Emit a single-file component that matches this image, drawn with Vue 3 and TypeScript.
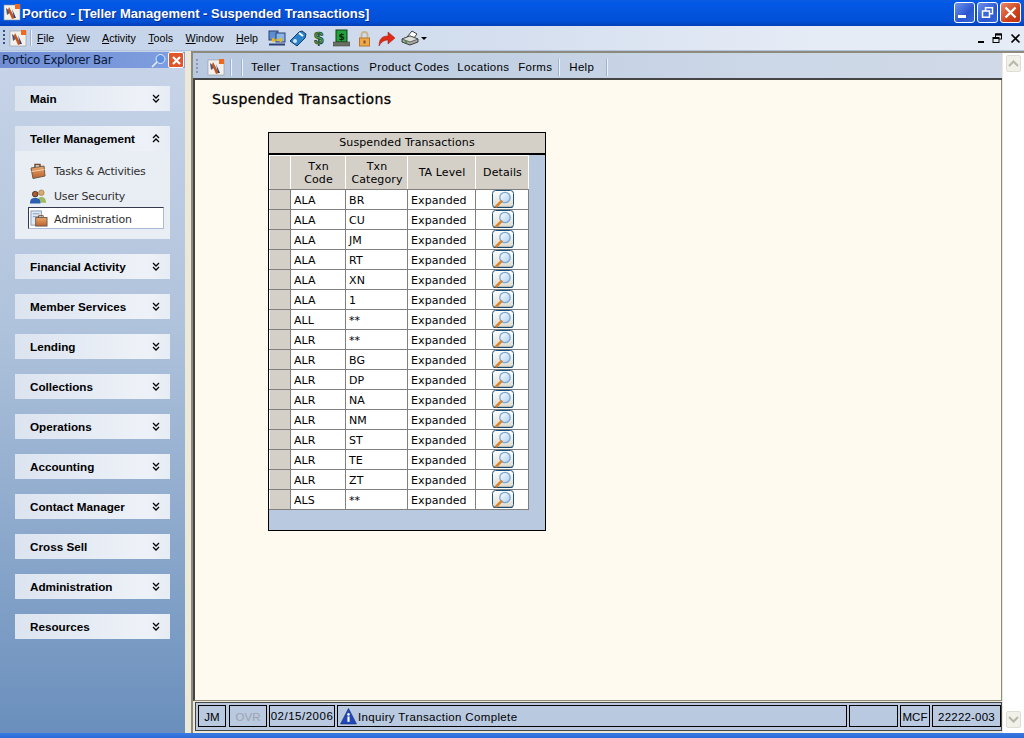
<template>
  <div class="window">
    <header class="titlebar">
      <svg class="app-icon" width="18" height="18" viewBox="0 0 18 18"><use href="#portico-logo" /></svg>
      <span class="title-text">Portico - [Teller Management - Suspended Transactions]</span>
      <div class="win-buttons">
        <button class="win-btn"><i class="glyph-min"></i></button>
        <button class="win-btn">
          <svg width="15" height="15" viewBox="0 0 15 15" fill="none" stroke="#fff" stroke-width="1.5"><rect x="5.5" y="2.7" width="7" height="6" /><rect x="2.5" y="6" width="7" height="6.2" fill="#3b68d8" /></svg>
        </button>
        <button class="win-btn close">
          <svg width="15" height="15" viewBox="0 0 15 15" stroke="#fff" stroke-width="2.4"><path d="M2.5 2.5l10 10M12.5 2.5l-10 10" /></svg>
        </button>
      </div>
    </header>

    <svg width="0" height="0" class="defs">
      <defs>
        <linearGradient id="btn-fill" x1="0" y1="0" x2="0" y2="1"><stop offset="0" stop-color="#ffffff" /><stop offset="1" stop-color="#dedbcc" /></linearGradient>
        <linearGradient id="glass" x1="0" y1="0" x2="1" y2="1"><stop offset="0" stop-color="#ffffff" /><stop offset="1" stop-color="#a9cdee" /></linearGradient>
        <linearGradient id="case-fill" x1="0" y1="0" x2="0" y2="1"><stop offset="0" stop-color="#eaa66c" /><stop offset="1" stop-color="#b9622c" /></linearGradient>
        <g id="portico-logo">
          <rect x="1" y="2" width="16" height="15" fill="#f4f1ea" stroke="#8d95a5" stroke-width=".6" />
          <rect x="12" y="1" width="5" height="5" fill="#ee6a1f" />
          <path d="M3 5l5 4-4 3z" fill="#4d5a78" />
          <path d="M6 4l6 11-3 1-4-9z" fill="#c8541c" />
          <path d="M9 6l4 9h-2z" fill="#24417f" />
        </g>
        <g id="lens">
          <rect x=".5" y=".5" width="21" height="17" rx="3" fill="url(#btn-fill)" stroke="#1d527f" />
          <path d="M1.500 17.300h19" stroke="#17446c" />
          <circle cx="13" cy="7.500" r="5.200" fill="url(#glass)" stroke="#7aa6d2" stroke-width="1.300" />
          <path d="M9.300 11.300l-5 5" stroke="#d8822c" stroke-width="2.600" stroke-linecap="round" />
        </g>
      </defs>
    </svg>

    <div class="menubar">
      <span class="grip"></span>
      <svg class="menu-logo" width="18" height="18" viewBox="0 0 18 18"><use href="#portico-logo" /></svg>
      <span class="sep"></span>
      <nav class="menus">
        <span v-for="m in menus" :key="m.rest" class="menu"><u>{{ m.key }}</u>{{ m.rest }}</span>
      </nav>
      <div class="tools">
        <svg width="18" height="16" viewBox="0 0 18 16"><rect x="1" y="1" width="9" height="9" fill="#5d8fd0" stroke="#2b3f78" /><rect x="8" y="3" width="9" height="9" fill="#8ab4e4" stroke="#2b3f78" /><path d="M4 10h10M4 10l2-2M4 10l2 2M14 10l-2-2M14 10l-2 2" stroke="#e8b81e" stroke-width="1.6" fill="none" /><path d="M1 14.500h16" stroke="#2b3f78" stroke-width="2" /></svg>
        <svg width="18" height="17" viewBox="0 0 18 17"><path d="M1 11l9-9 3-1 4 3-1 4-8 8z" fill="#2c82c8" stroke="#123f70" /><circle cx="6" cy="11" r="2" fill="#cfe8fa" /><path d="M10 3l4 3" stroke="#fff" stroke-width="2" /></svg>
        <svg width="13" height="18" viewBox="0 0 13 18"><text x="0" y="15" class="dollar" fill="#4aa04a" stroke="#23402a" stroke-width=".7">$</text></svg>
        <svg width="17" height="18" viewBox="0 0 17 18"><rect x="3" y="1" width="11" height="12" fill="#23a23c" stroke="#123a1c" /><text x="5.500" y="11" class="dollar-sm" fill="#06240d">$</text><rect x="0" y="13" width="17" height="4" fill="#6b6f63" stroke="#3a3c36" stroke-width=".5" /></svg>
        <svg width="13" height="17" viewBox="0 0 13 17"><path d="M3.500 8V5a3 3 0 016 0v3" fill="none" stroke="#c9b48c" stroke-width="1.800" /><rect x="1.500" y="8" width="10" height="8" fill="#eea84a" stroke="#b5762d" /><rect x="5.500" y="10.500" width="2" height="3" fill="#8a4f1c" /></svg>
        <svg width="18" height="17" viewBox="0 0 18 17"><path d="M1 16c0-7 3-10 9-10V2l7 6-7 6V10c-4 0-7 2-9 6z" fill="#df2a18" stroke="#98200f" stroke-width=".5" /></svg>
        <svg width="18" height="16" viewBox="0 0 18 16"><path d="M6 7l5-6 5 3-4 5z" fill="#fff" stroke="#3c3c3c" /><path d="M1 9l8-3 8 3v3l-8 3-8-3z" fill="#a9a9a2" stroke="#3c3c3c" /><path d="M1 9l8 3 8-3-8-3z" fill="#dededa" stroke="#3c3c3c" stroke-width=".7" /><rect x="4" y="11" width="2" height="2" fill="#3aa23a" /></svg>
        <i class="caret"></i>
      </div>
      <div class="mdi-buttons">
        <i class="mdi-min"></i>
        <svg width="11" height="11" viewBox="0 0 11 11" fill="none" stroke="#000"><rect x="3.500" y="1" width="6" height="5" stroke-width="1" /><path d="M3.500 1.500h6" stroke-width="2" /><rect x="1" y="4.500" width="6" height="5" fill="#e5ebf5" /><path d="M1 5h6" stroke-width="2" /></svg>
        <svg width="11" height="11" viewBox="0 0 11 11" stroke="#000" stroke-width="1.700"><path d="M1.500 1.500l8 8M9.500 1.500l-8 8" /></svg>
      </div>
    </div>

    <div class="workspace">
      <aside class="explorer">
        <div class="explorer-head">
          <span>Portico Explorer Bar</span>
          <svg width="17" height="15" viewBox="0 0 17 15"><circle cx="10.500" cy="6" r="4.500" fill="#5f8fe0" stroke="#e6eeff" /><path d="M7 9l-5 5" stroke="#e6eeff" stroke-width="1.600" /></svg>
          <button class="explorer-close">
            <svg width="11" height="11" viewBox="0 0 11 11" stroke="#fff" stroke-width="2.200"><path d="M2 2l7 7M9 2l-7 7" /></svg>
          </button>
        </div>
        <div class="sections">
          <section v-for="s in sections" :key="s.name" class="section">
            <div class="section-head">
              <span>{{ s.name }}</span>
              <svg width="8" height="9" viewBox="0 0 8 9" fill="none" stroke="#000" stroke-width="1.300">
                <path v-if="s.items" d="M1 4l3-3 3 3M1 8l3-3 3 3" />
                <path v-else d="M1 1l3 3 3-3M1 5l3 3 3-3" />
              </svg>
            </div>
            <div v-if="s.items" class="section-body">
              <div v-for="it in s.items" :key="it.label" class="nav-item" :class="{ active: it.active }">
                <i class="nav-icon">
                  <svg v-if="it.icon === 'case'" width="16" height="16" viewBox="0 0 16 16"><path d="M5 4V1.500h5V4" fill="none" stroke="#7a4a26" stroke-width="1.500" /><path d="M1 5l13-2 1 10-12 2.500z" fill="url(#case-fill)" stroke="#6b5a4a" /><path d="M1.500 8.500l13-2" stroke="#f6d2ab" /></svg>
                  <svg v-else-if="it.icon === 'users'" width="17" height="15" viewBox="0 0 18 15"><circle cx="12" cy="3.500" r="3" fill="#d9a86a" stroke="#7a6a3a" stroke-width=".5" /><path d="M8 14c0-5 2-6 4-6s5 1 5 6z" fill="#9cbb62" /><circle cx="5.500" cy="5" r="3" fill="#a85a30" stroke="#222" stroke-width=".7" /><path d="M0 15c0-5 2-6 5.500-6s5.500 1 5.500 6z" fill="#2c5fb0" /></svg>
                  <svg v-else width="18" height="17" viewBox="0 0 19 18"><rect x="1" y="1" width="11" height="15" fill="#dfe8f5" stroke="#8a9ab5" /><path d="M3 4h7M3 7h7" stroke="#8a9ab5" /><path d="M9 8V6h5v2" fill="none" stroke="#7a4a26" /><rect x="6" y="8" width="12" height="9" fill="url(#case-fill)" stroke="#6b5a4a" /></svg>
                </i>
                <span class="nav-label">{{ it.label }}</span>
              </div>
            </div>
          </section>
        </div>
      </aside>

      <div class="splitter"></div>

      <main class="child-frame">
        <div class="child-main">
          <div class="child-toolbar">
            <span class="grip light"></span>
            <svg class="menu-logo" width="18" height="18" viewBox="0 0 18 18"><use href="#portico-logo" /></svg>
            <span class="sep first"></span>
            <span class="sep second"></span>
            <span class="child-menu wide">Teller</span>
            <span class="child-menu wide">Transactions</span>
            <span class="child-menu">Product Codes</span>
            <span class="child-menu locations">Locations</span>
            <span class="child-menu forms">Forms</span>
            <span class="sep third"></span>
            <span class="child-menu">Help</span>
            <span class="sep fourth"></span>
          </div>

          <div class="page">
            <h1>Suspended Transactions</h1>
            <div class="grid-box">
              <div class="grid-caption">Suspended Transactions</div>
              <div class="grid-body">
                <table>
                  <thead>
                    <tr>
                      <th class="c0"></th>
                      <th class="c1">Txn<br />Code</th>
                      <th class="c2">Txn<br />Category</th>
                      <th class="c3">TA Level</th>
                      <th class="c4">Details</th>
                    </tr>
                  </thead>
                  <tbody>
                    <tr v-for="(r, i) in rows" :key="i">
                      <td class="rowhead"></td>
                      <td>{{ r[0] }}</td>
                      <td>{{ r[1] }}</td>
                      <td>Expanded</td>
                      <td class="details"><svg width="22" height="18" viewBox="0 0 22 18"><use href="#lens" /></svg></td>
                    </tr>
                  </tbody>
                </table>
              </div>
            </div>
          </div>

          <footer class="statusbar">
            <span class="cell jm">JM</span>
            <span class="cell ovr">OVR</span>
            <span class="cell date">02/15/2006</span>
            <span class="cell message">
              <svg width="17" height="17" viewBox="0 0 16 16"><path d="M8 .5L15.500 15H.5z" fill="#2048b8" stroke="#16307e" stroke-width=".6" /><circle cx="8" cy="6" r="1.200" fill="#fff" /><rect x="7" y="8" width="2" height="5" fill="#fff" /></svg>
              Inquiry Transaction Complete
            </span>
            <span class="cell blank"></span>
            <span class="cell mcf">MCF</span>
            <span class="cell acct">22222-003</span>
          </footer>
        </div>

        <div class="scrollbar">
          <button class="scroll-btn"><svg width="11" height="7" viewBox="0 0 11 7" fill="none" stroke="#b7b7aa" stroke-width="2"><path d="M1 6l4.500-4.500L10 6" /></svg></button>
          <button class="scroll-btn"><svg width="11" height="7" viewBox="0 0 11 7" fill="none" stroke="#b7b7aa" stroke-width="2"><path d="M1 1l4.500 4.500L10 1" /></svg></button>
        </div>
      </main>
    </div>
    <div class="taskstrip"></div>
  </div>
</template>

<script setup lang="ts">
interface NavItem {
  label: string;
  icon: string;
  active?: boolean;
}
interface Section {
  name: string;
  items?: NavItem[];
}

const menus = [
  { key: "F", rest: "ile" },
  { key: "V", rest: "iew" },
  { key: "A", rest: "ctivity" },
  { key: "T", rest: "ools" },
  { key: "W", rest: "indow" },
  { key: "H", rest: "elp" },
];

const sections: Section[] = [
  { name: "Main" },
  {
    name: "Teller Management",
    items: [
      { label: "Tasks & Activities", icon: "case" },
      { label: "User Security", icon: "users" },
      { label: "Administration", icon: "admin", active: true },
    ],
  },
  { name: "Financial Activity" },
  { name: "Member Services" },
  { name: "Lending" },
  { name: "Collections" },
  { name: "Operations" },
  { name: "Accounting" },
  { name: "Contact Manager" },
  { name: "Cross Sell" },
  { name: "Administration" },
  { name: "Resources" },
];

const rows: [string, string][] = [
  ["ALA", "BR"],
  ["ALA", "CU"],
  ["ALA", "JM"],
  ["ALA", "RT"],
  ["ALA", "XN"],
  ["ALA", "1"],
  ["ALL", "**"],
  ["ALR", "**"],
  ["ALR", "BG"],
  ["ALR", "DP"],
  ["ALR", "NA"],
  ["ALR", "NM"],
  ["ALR", "ST"],
  ["ALR", "TE"],
  ["ALR", "ZT"],
  ["ALS", "**"],
];
</script>

<style>
html, body { margin: 0; overflow: hidden; }
</style>

<style scoped>
.window { width: 1024px; height: 738px; display: flex; flex-direction: column; font-family: "DejaVu Sans", sans-serif; font-size: 11px; color: #000; overflow: hidden; background: #ece9d8; }
.defs { position: absolute; }

.titlebar { height: 26px; flex: none; display: flex; align-items: center; padding: 0 3px 2px 3px; box-sizing: border-box; background: linear-gradient(#0a5be0 0, #0058e6 12%, #0453dd 50%, #0050d8 80%, #0040b8 100%); }
.title-text { margin: 2px 0 0 1px; color: #fff; font: bold 13px "Liberation Sans", sans-serif; text-shadow: 1px 1px 0 #0a2f8c; }
.win-buttons { margin-left: auto; display: flex; gap: 2px; }
.win-btn { width: 21px; height: 21px; padding: 0; border: 1px solid #fff; border-radius: 3px; background: linear-gradient(135deg, #6f93ea, #2a55d2 60%, #3b68d8); display: flex; align-items: center; justify-content: center; position: relative; }
.win-btn.close { background: linear-gradient(135deg, #e88a6a, #d0421c 60%, #b8300f); }
.glyph-min { display: block; width: 8px; height: 3px; background: #fff; margin: 8px 5px 0 0; }

.menubar { height: 25px; flex: none; display: flex; align-items: center; box-sizing: border-box; padding-left: 3px; background: linear-gradient(90deg, #c1d1e8, #d5dfef 50%, #e6ecf6 80%); border-bottom: 1px solid #b4c4de; }
.grip { width: 2px; height: 16px; margin-right: 4px; background: repeating-linear-gradient(#33538c 0 2px, transparent 2px 4px); }
.grip.light { background: repeating-linear-gradient(#8f99a8 0 2px, transparent 2px 4px); margin-right: 9px; }
.menu-logo { flex: none; }
.sep { width: 1px; height: 16px; background: #eef2f8; border-left: 1px solid #9fb2cd; margin-left: 3px; }
.sep.first { margin-left: 5px; height: 17px; }
.sep.second { margin-left: 9px; margin-right: 8px; height: 17px; }
.sep.third { height: 17px; margin: 0 9px 0 0; }
.sep.fourth { height: 17px; margin: 0 0 0 4px; }
.menus { display: flex; gap: 12.400px; margin-left: 5px; font: 10.700px "Liberation Sans", sans-serif; }
.menu u { text-decoration: underline; }
.tools { display: flex; align-items: center; margin-left: 10px; }
.tools svg:nth-child(2) { margin-left: 3px; }
.tools svg:nth-child(3) { margin-left: 7px; }
.tools svg:nth-child(4) { margin-left: 6px; }
.tools svg:nth-child(5) { margin-left: 8px; }
.tools svg:nth-child(6) { margin-left: 7px; }
.tools svg:nth-child(7) { margin-left: 5px; }
.dollar { font: bold 17px "Liberation Sans", sans-serif; }
.dollar-sm { font: bold 9px "DejaVu Sans", sans-serif; }
.caret { width: 0; height: 0; border: 3px solid transparent; border-top: 3px solid #000; border-bottom: 0; margin-left: 2px; }
.mdi-buttons { margin-left: auto; display: flex; align-items: center; gap: 7px; padding-right: 3px; }
.mdi-min { display: block; width: 6px; height: 2px; background: #000; margin-top: 8px; margin-right: 1px; }

.workspace { flex: 1; min-height: 0; display: flex; }
.explorer { width: 185px; flex: none; display: flex; flex-direction: column; background: linear-gradient(#c8d4e8, #b0c3dc 40%, #6a8fbc 100%); }
.explorer-head { height: 16px; flex: none; margin-top: 1px; display: flex; align-items: center; padding: 0 1px 0 2px; background: linear-gradient(90deg, #6f8ed4, #7f9fe0); color: #0a1838; font: 11.800px "DejaVu Sans", sans-serif; letter-spacing: -.35px; }
.explorer-head span { flex: 1; }
.explorer-close { width: 16px; height: 16px; padding: 0; border: 1px solid #fff; border-radius: 2px; background: #e0552c; display: flex; align-items: center; justify-content: center; margin-left: 1px; }
.sections { display: flex; flex-direction: column; gap: 15px; padding: 18px 15px 0; }
.section-head { height: 25px; display: flex; align-items: center; justify-content: space-between; padding: 0 10px 0 15px; background: linear-gradient(90deg, #dce4f0, #eef2f8 85%, #e6ecf4); font: bold 11.700px "Liberation Sans", sans-serif; color: #000; }
.section-body { height: 88px; padding: 9px 6px 0 13px; box-sizing: border-box; background: #e9eef4; font-size: 11px; letter-spacing: -.2px; }
.nav-item { height: 22px; margin-bottom: 3px; display: flex; align-items: center; gap: 4px; padding-left: 2px; color: #2f2f2f; box-sizing: border-box; }
.nav-item:nth-child(2) { margin-bottom: 0; }
.nav-icon { width: 20px; height: 18px; flex: none; display: flex; align-items: center; }
.nav-item.active { background: #fff; border: 1px solid; border-color: #33384a #a9bbd8 #a9bbd8 #33384a; padding: 0 0 0 1px; }
.nav-item.active .nav-label { margin-top: 2px; }

.splitter { flex: none; background: #ece9d8; border-right: 2px solid #8d8b7c; width: 6px; }

.child-frame { flex: 1; min-width: 0; display: flex; background: #ece9d8; border-top: 2px solid #8d8b7c; }
.child-main { flex: 1; min-width: 0; display: flex; flex-direction: column; }
.child-toolbar { height: 27px; flex: none; display: flex; align-items: center; padding: 3px 0 0 3px; box-sizing: border-box; background: linear-gradient(90deg, #b8c9e0, #ccd7e7 70%, #cfd9e8); border-bottom: 2px solid #454545; margin-right: 1px; font-size: 11px; }
.child-toolbar .child-menu { margin-right: 8px; font: 11.500px "Liberation Sans", sans-serif; letter-spacing: .3px; }
.child-toolbar .child-menu.wide { margin-right: 10px; }
.child-toolbar .child-menu.locations { margin-right: 9px; }
.child-toolbar .child-menu.forms { margin-right: 6px; }
.page { flex: 1; background: #fffaf0; padding: 11px 17px; min-height: 0; margin-right: 1px; border-left: 2px solid #454545; border-right: 1px solid #8d8b7c; border-bottom: 1px solid #8d8b7c; }
h1 { margin: 0 0 25px; font: 500 14px "DejaVu Sans", sans-serif; line-height: 16px; letter-spacing: .45px; -webkit-text-stroke: .3px #000; }
.grid-box { margin-left: 56px; width: 278px; border: 1px solid #000; box-sizing: border-box; background: #b8c9e0; letter-spacing: .1px; }
.grid-caption { height: 20px; line-height: 19px; text-align: center; background: #d4d0c8; border-bottom: 2px solid #000; font-size: 11px; }
.grid-body { height: 375px; }
table { border-collapse: collapse; table-layout: fixed; width: 259px; }
th { height: 33px; background: #d4d0c8; font-weight: normal; padding: 0 0 0 1px; border-right: 1px solid #fff; border-bottom: 1px solid #808080; border-left: 1px solid #fff; border-top: 1px solid #fff; line-height: 13px; font-size: 11px; }
.c0 { width: 19px; } .c1 { width: 53px; } .c2 { width: 60px; } .c3 { width: 66px; } .c4 { width: 51px; }
td { height: 19px; box-sizing: border-box; padding: 2px 0 0 3px; background: #fff; border-right: 1px solid #808080; border-bottom: 1px solid #808080; line-height: 17px; font-size: 11px; }
td.rowhead { background: #d4d0c8; border-left: 1px solid #fff; border-top: 1px solid #fff; }
td.details { padding: 0 0 0 1px; text-align: center; vertical-align: top; }
td.details svg { display: block; margin: 0 auto; }

.statusbar { height: 29px; flex: none; display: flex; align-items: center; gap: 2px; box-sizing: border-box; padding: 0 0 1px 2px; margin: 1px 1px 2px 2px; background: #b8c9e0; border: 1px solid #454545; font: 11.500px "Liberation Sans", sans-serif; }
.cell { height: 22px; padding-top: 1px; border: 1px solid #000; box-sizing: border-box; display: flex; align-items: center; justify-content: center; white-space: nowrap; }
.jm { width: 28px; margin-right: 1px; } .ovr { width: 38px; color: #9ea4ad; } .date { width: 66px; letter-spacing: .5px; padding-top: 0; }
.message { flex: 1; justify-content: flex-start; gap: 1px; padding-left: 2px; letter-spacing: .35px; }
.blank { width: 49px; flex: none; } .mcf { width: 30px; flex: none; } .acct { width: 69px; flex: none; letter-spacing: .2px; }

.scrollbar { width: 21px; flex: none; display: flex; flex-direction: column; justify-content: space-between; align-items: center; padding: 2px 0 5px; box-sizing: border-box; background: #fff; }
.scroll-btn { width: 15px; height: 17px; padding: 0; border: 1px solid #e0ded2; border-radius: 2px; background: #f2f1e9; display: flex; align-items: center; justify-content: center; }

.taskstrip { height: 5px; flex: none; background: linear-gradient(#3a7be0, #2a6ad8); }
</style>
